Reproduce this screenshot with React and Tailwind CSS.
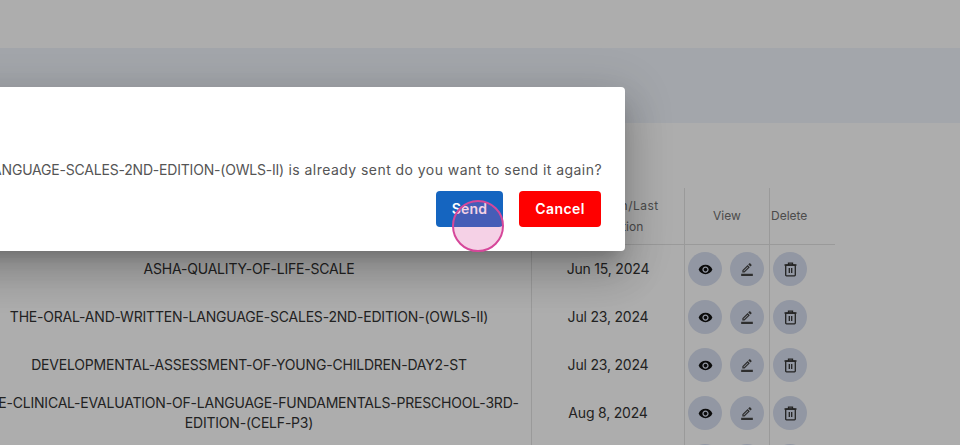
import React from 'react';
import { MdRemoveRedEye, MdOutlineBorderColor } from 'react-icons/md';

const font = { fontFamily: '"Inter", "Liberation Sans", sans-serif' };

const rows = [
  { name: 'ASHA-QUALITY-OF-LIFE-SCALE', date: 'Jun 15, 2024' },
  { name: 'THE-ORAL-AND-WRITTEN-LANGUAGE-SCALES-2ND-EDITION-(OWLS-II)', date: 'Jul 23, 2024' },
  { name: 'DEVELOPMENTAL-ASSESSMENT-OF-YOUNG-CHILDREN-DAY2-ST', date: 'Jul 23, 2024' },
  { name: 'THE-CLINICAL-EVALUATION-OF-LANGUAGE-FUNDAMENTALS-PRESCHOOL-3RD-EDITION-(CELF-P3)', date: 'Aug 8, 2024' },
  { name: 'GOAL-ATTAINMENT-SCALE', date: 'Aug 8, 2024' },
];

const TrashIcon = () => (
  <svg width="13" height="15" viewBox="0 0 13 15" fill="none" stroke="#333" strokeWidth="1.3">
    <path d="M0.5 3h12M4.5 2.8V1.2h4v1.6" />
    <rect x="1.7" y="3.2" width="9.6" height="10.6" rx="0.8" />
    <path d="M5.3 6v5M7.7 6v5" />
  </svg>
);

const RoundButton = ({ children }) => (
  <button className="w-[34px] h-[34px] rounded-full bg-[#d8dff0] flex items-center justify-center shrink-0">
    {children}
  </button>
);

const App = () => {
  return (
    <div className="relative w-[960px] h-[445px] overflow-hidden bg-white" style={font}>
      {/* page behind the dialog */}
      <div className="h-12" />
      <div className="h-[75px] bg-[#f0f5fd]" />

      <div className="mt-[65px] ml-[-33px] w-[868px] text-[#333]">
        <div className="flex h-[57px] border-b border-[#e3e3e3] text-xs text-[#707070]">
          <div className="w-[565px] border-r border-[#e3e3e3]" />
          <div className="w-[153px] border-r border-[#e3e3e3] flex flex-col items-center justify-center text-center leading-[21px]">
            <span className="tracking-[0.5px]">Distribution/Last</span>
            <span>Modification</span>
          </div>
          <div className="w-[85px] border-r border-[#e3e3e3] flex items-center justify-center">View</div>
          <div className="w-[65px] flex items-center pl-px">Delete</div>
        </div>

        {rows.map((row) => (
          <div key={row.name} className="flex h-12">
            <div className="w-[565px] border-r border-[#e3e3e3] flex items-center justify-center text-center text-sm leading-5 tracking-[-0.2px] px-2">
              {row.name}
            </div>
            <div className="w-[153px] border-r border-[#e3e3e3] flex items-center justify-center text-sm tracking-[-0.2px]">
              {row.date}
            </div>
            <div className="w-[85px] border-r border-[#e3e3e3] flex items-center gap-2 pl-[3px]">
              <RoundButton><MdRemoveRedEye size={15} color="#111" /></RoundButton>
              <RoundButton><MdOutlineBorderColor size={14} color="#444" /></RoundButton>
            </div>
            <div className="w-[65px] flex items-center pl-[3px]">
              <RoundButton><TrashIcon /></RoundButton>
            </div>
          </div>
        ))}
      </div>

      {/* backdrop */}
      <div className="absolute inset-0 bg-black/32" />

      {/* dialog */}
      <div className="absolute top-[87px] right-[335px] h-[164px] bg-white rounded shadow-[0_11px_15px_-7px_rgba(0,0,0,0.2),0_24px_38px_3px_rgba(0,0,0,0.14),0_9px_46px_8px_rgba(0,0,0,0.12)] pr-[23px] pl-6 pt-[73px]">
        <p className="text-sm leading-5 text-[#555] whitespace-nowrap">
          <span className="tracking-[-0.2px]">THE-ORAL-AND-WRITTEN-LANGUAGE-SCALES-2ND-EDITION-(OWLS-II)</span>
          <span className="tracking-[0.45px]"> is already sent do you want to send it again?</span>
        </p>
        <div className="flex justify-end gap-4 mt-[11px] pr-px">
          <button className="w-[67px] h-9 rounded bg-[#1565c0] text-white text-sm font-semibold tracking-[0.2px]">Send</button>
          <button className="w-[82px] h-9 rounded bg-[#ff0000] text-white text-sm font-semibold tracking-[0.4px]">Cancel</button>
        </div>
      </div>

      {/* touch indicator */}
      <div className="absolute left-[452px] top-[200px] w-[52px] h-[52px] rounded-full border-2 border-[#d6479a] bg-[#d6479a]/25" />
    </div>
  );
};

export default App;
